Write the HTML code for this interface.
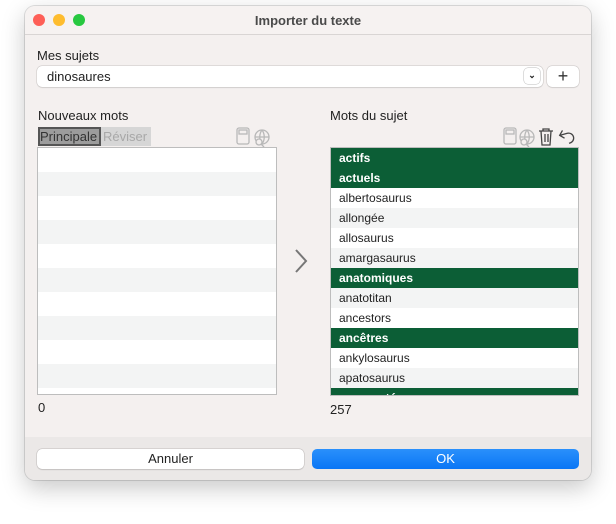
<!DOCTYPE html>
<html><head><meta charset="utf-8"><style>
*{margin:0;padding:0;box-sizing:border-box}
body{width:616px;height:524px;background:#fff;position:relative;font-family:"Liberation Sans",sans-serif;overflow:hidden}
.win{position:absolute;left:25px;top:6px;width:566px;height:474px;background:#f4f0ef;border-radius:10px;box-shadow:0 8px 24px rgba(0,0,0,.22),0 0 0 1px rgba(0,0,0,.12);overflow:hidden}
.title{position:absolute;left:0;top:0;width:100%;height:29px;background:#f6f2f1;border-bottom:1px solid #d9d5d4;text-align:center;font-weight:bold;font-size:13px;color:#4a4a4a;line-height:29px}
.dot{position:absolute;top:8px;width:12px;height:12px;border-radius:50%}
.abs{position:absolute}
.lbl{font-size:13px;color:#222}
.row{height:20px;font-size:12px;line-height:20px;padding-left:8px;color:#222}
.g{background:#0c5e36;color:#fff;font-weight:bold}
.a{background:#f3f4f4}
.lr{height:24px}
.footer{position:absolute;left:0;top:431px;width:100%;height:43px;background:#ebe8e7}
</style></head><body>
<div class="win">
<div class="title">Importer du texte
<div class="dot" style="left:8px;background:#fe5f57"></div>
<div class="dot" style="left:28px;background:#febc2e"></div>
<div class="dot" style="left:48px;background:#28c840"></div>
</div>
<div class="abs lbl" style="left:12px;top:42px">Mes sujets</div>
<div class="abs" style="left:12px;top:60px;width:506px;height:21px;background:#fff;border-radius:5px;box-shadow:0 0 0 .5px #c8c4c3,0 1px 1px rgba(0,0,0,.1);font-size:13px;line-height:21px;padding-left:10px;color:#222">dinosaures
<div class="abs" style="right:3px;top:2px;width:16px;height:16px;border-radius:4px;box-shadow:0 0 0 .5px #bbb;text-align:center;line-height:14px;font-size:9px;font-weight:bold">&#8964;</div></div>
<div class="abs" style="left:522px;top:60px;width:32px;height:21px;background:#fff;border-radius:5px;box-shadow:0 0 0 .5px #c8c4c3,0 1px 1px rgba(0,0,0,.1);text-align:center;font-size:18px;line-height:20px;color:#333">+</div>
<div class="abs lbl" style="left:13px;top:102px">Nouveaux mots</div>
<div class="abs" style="left:13px;top:121px;width:63px;height:19px;background:#9c9c9c;border:2px solid #555;font-size:13px;line-height:15px;color:#333">Principale</div>
<div class="abs" style="left:76px;top:121px;width:50px;height:19px;background:#d6d6d6;font-size:13px;line-height:19px;color:#a8a8a8;padding-left:2px">Réviser</div>
<svg class="abs" style="left:210px;top:120px" width="40" height="22" viewBox="0 0 40 22" fill="none" stroke="#b8b8b8" stroke-width="1.3"><rect x="2" y="2" width="12" height="16" rx="2"/><rect x="4" y="4" width="8" height="4"/><circle cx="27" cy="11" r="7"/><path d="M20 11h14M27 4c-3 4-3 10 0 14M27 4c3 4 3 10 0 14"/><circle cx="24" cy="16" r="3" fill="#f4f0ef"/><path d="M26 18l3 3"/></svg>
<div class="abs" style="left:12px;top:141px;width:240px;height:248px;background:#fff;border:1px solid #bdbdbd;overflow:hidden">
<div class="lr"></div><div class="lr a"></div><div class="lr"></div><div class="lr a"></div><div class="lr"></div><div class="lr a"></div><div class="lr"></div><div class="lr a"></div><div class="lr"></div><div class="lr a"></div><div class="lr"></div></div>
<div class="abs lbl" style="left:13px;top:394px">0</div>
<svg class="abs" style="left:268px;top:241px" width="16" height="28" viewBox="0 0 16 28"><path d="M3 3l10 11L3 25" fill="none" stroke="#777" stroke-width="2"/></svg>
<div class="abs lbl" style="left:305px;top:102px">Mots du sujet</div>
<svg class="abs" style="left:477px;top:120px" width="76" height="22" viewBox="0 0 76 22" fill="none" stroke-width="1.3"><g stroke="#b8b8b8"><rect x="2" y="2" width="12" height="16" rx="2"/><rect x="4" y="4" width="8" height="4"/><circle cx="25" cy="11" r="7"/><path d="M18 11h14M25 4c-3 4-3 10 0 14M25 4c3 4 3 10 0 14"/><circle cx="22" cy="16" r="3" fill="#f4f0ef"/><path d="M24 18l3 3"/></g><g stroke="#444"><path d="M37 5h14M41 5V3h6v2M39 5l1 14h8l1-14M43 8v8M46 8v8"/><path d="M62 4l-4 4 4 4M58 8h8a5 5 0 0 1 0 10h-1" transform="rotate(-15 63 10)"/></g></svg>
<div class="abs" style="left:305px;top:141px;width:249px;height:249px;background:#fff;border:1px solid #bdbdbd;overflow:hidden">
<div class="row g">actifs</div><div class="row g">actuels</div><div class="row">albertosaurus</div><div class="row a">allongée</div><div class="row">allosaurus</div><div class="row a">amargasaurus</div><div class="row g">anatomiques</div><div class="row a">anatotitan</div><div class="row">ancestors</div><div class="row g">ancêtres</div><div class="row">ankylosaurus</div><div class="row a">apatosaurus</div><div class="row g">apparentés</div></div>
<div class="abs lbl" style="left:305px;top:396px">257</div>
<div class="footer"></div>
<div class="abs" style="left:12px;top:443px;width:267px;height:20px;background:#fff;border-radius:5px;box-shadow:0 0 0 .5px #c0bcbb,0 1px 1px rgba(0,0,0,.15);text-align:center;font-size:13px;line-height:20px;color:#222">Annuler</div>
<div class="abs" style="left:287px;top:443px;width:267px;height:20px;background:linear-gradient(#2a90fb,#0a76f5);border-radius:5px;text-align:center;font-size:13px;line-height:20px;color:#fff">OK</div>
</div>
</body></html>
